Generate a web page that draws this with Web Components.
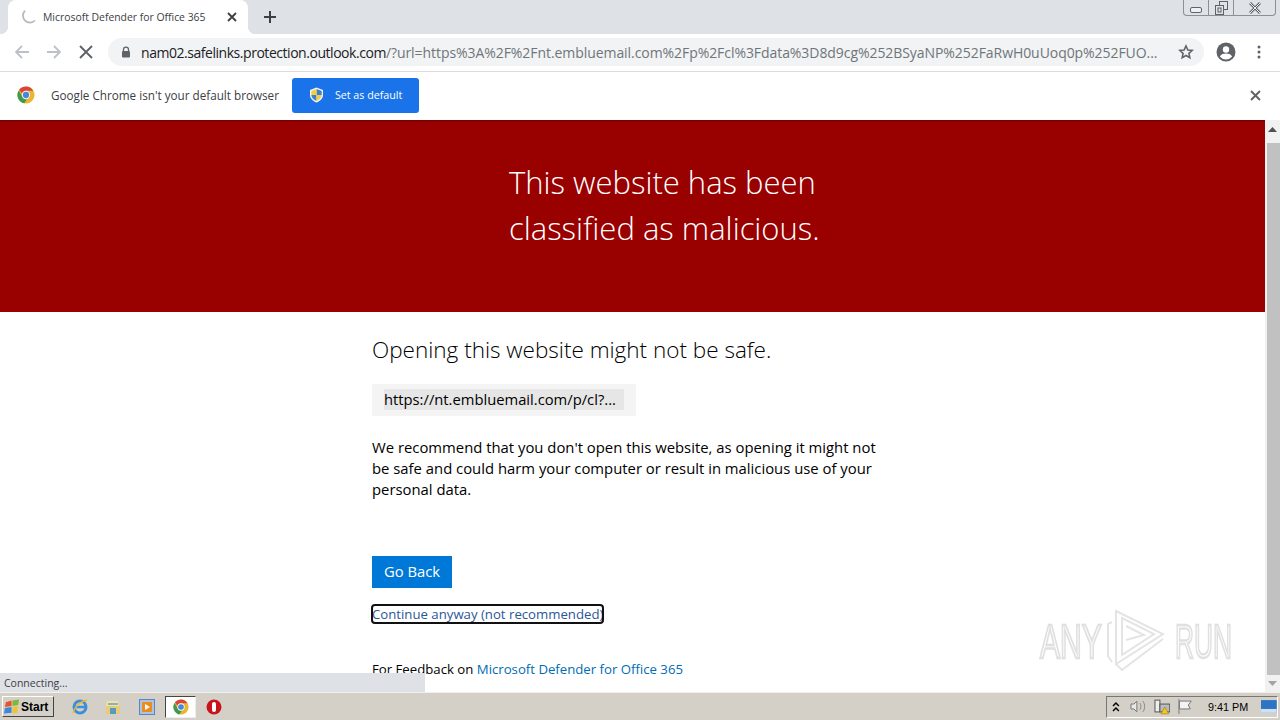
<!DOCTYPE html>
<html>
<head>
<meta charset="utf-8">
<title>Microsoft Defender for Office 365</title>
<style>
  html, body { margin: 0; height: 100%; overflow: hidden; }
  body { display: flex; flex-direction: column; height: 720px; font-family: "Open Sans", sans-serif; }
</style>
</head>
<body>
<tab-strip></tab-strip>
<nav-bar></nav-bar>
<info-bar></info-bar>
<page-view>
  <warning-banner>This website has been<br>classified as malicious.</warning-banner>
  <warning-body></warning-body>
</page-view>
<task-bar></task-bar>

<script>
const chromeLogo = (size) => `
  <svg width="${size}" height="${size}" viewBox="0 0 20 20">
    <circle cx="10" cy="10" r="9.5" fill="#e8b730"/>
    <path d="M10 .5a9.5 9.5 0 0 1 8.2 4.75H10a4.75 4.75 0 0 0-4.5 3.2L2.4 4.2A9.5 9.5 0 0 1 10 .5z" fill="#d9453a"/>
    <path d="M1.9 5 6 12.3a4.75 4.75 0 0 0 5 2.3l-2.9 4.7A9.5 9.5 0 0 1 1.9 5z" fill="#3c9a52"/>
    <circle cx="10" cy="10" r="4.6" fill="#f4f4f4"/>
    <circle cx="10" cy="10" r="3.5" fill="#4a86d8"/>
  </svg>`;

class TabStrip extends HTMLElement {
  constructor() {
    super();
    this.attachShadow({ mode: 'open' }).innerHTML = `
      <style>
        :host { display: flex; height: 34px; background: #dee1e6; padding-left: 8px; position: relative; flex: none; }
        .tab { width: 240px; height: 34px; box-sizing: border-box; background: #fff; border-radius: 8px 8px 0 0; position: relative;
               display: flex; align-items: center; padding: 0 0 0 12px; font: 10.4px "Open Sans", sans-serif; color: #3c4043; }
        .tab::before, .tab::after { content: ""; position: absolute; bottom: 0; width: 8px; height: 8px; background: #fff; }
        .tab::before { left: -8px; -webkit-mask: radial-gradient(circle at 0 0, transparent 8px, #000 8.5px); }
        .tab::after { right: -8px; -webkit-mask: radial-gradient(circle at 100% 0, transparent 8px, #000 8.5px); }
        .spin { width: 16px; height: 16px; margin-right: 7px; flex: none; }
        .label { flex: 1; white-space: nowrap; }
        .close { margin-right: 10px; width: 12px; height: 12px; }
        .plus { margin: 10px 0 0 15px; width: 14px; height: 14px; }
        .win { position: absolute; top: 0; right: 4px; width: 93px; height: 16px; box-sizing: border-box;
               border: 1px solid #8b9097; border-top: 0; border-radius: 0 0 4px 4px; display: flex; background: #dfe2e7; }
        .win div { display: flex; align-items: center; justify-content: center; }
        .win div + div { border-left: 1px solid #8b9097; }
      </style>
      <div class="tab">
        <svg class="spin" viewBox="0 0 16 16"><path d="M5 1.6A7 7 0 1 0 15 11.5" fill="none" stroke="#b5b8bc" stroke-width="1.7"/></svg>
        <span class="label">Microsoft Defender for Office 365</span>
        <svg class="close" viewBox="0 0 12 12"><path d="M2 2l8 8M10 2l-8 8" stroke="#3c4043" stroke-width="1.8"/></svg>
      </div>
      <svg class="plus" viewBox="0 0 14 14"><path d="M7 1v12M1 7h12" stroke="#3c4043" stroke-width="2"/></svg>
      <div class="win">
        <div style="width:24px"><svg style="margin-top:4px" width="14" height="8" viewBox="0 0 14 8"><rect x="1.5" y="1.5" width="11" height="5" rx="1.5" fill="#eef0f2" stroke="#5f6368"/></svg></div>
        <div style="width:24px"><svg width="13" height="14" viewBox="0 0 13 14"><rect x="4.5" y=".5" width="8" height="8" fill="none" stroke="#5f6368"/><rect x=".5" y="4.5" width="8" height="9" fill="#dfe2e7" stroke="#5f6368"/><rect x="3" y="7" width="3" height="4" fill="none" stroke="#5f6368"/></svg></div>
        <div style="flex:1"><svg width="14" height="12" viewBox="0 0 14 12"><path d="M2 1l10 10M12 1L2 11" stroke="#5f6368" stroke-width="2.6"/><path d="M2 1l10 10M12 1L2 11" stroke="#eef0f2" stroke-width="1"/></svg></div>
      </div>`;
  }
}

class NavBar extends HTMLElement {
  constructor() {
    super();
    this.attachShadow({ mode: 'open' }).innerHTML = `
      <style>
        :host { display: flex; align-items: center; height: 38px; box-sizing: border-box; background: #fff;
                border-bottom: 1px solid #dadce0; flex: none; padding: 0 0 1px 14px; }
        svg { flex: none; }
        .omni { margin-left: 14px; width: 1096px; height: 28px; box-sizing: border-box; background: #f1f3f4; border-radius: 14px;
                display: flex; align-items: center; padding: 0 10px 0 12px; font: 14px "Open Sans", sans-serif; letter-spacing: -.065px; }
        .url { flex: 1; margin-left: 9px; white-space: nowrap; overflow: hidden; color: #70757a; }
        .url b { font-weight: 400; color: #202124; letter-spacing: -.46px; }
      </style>
      <svg width="16" height="16" viewBox="0 0 16 16"><path d="M15 8H2M8 2 2 8l6 6" fill="none" stroke="#bdc1c6" stroke-width="1.8"/></svg>
      <svg style="margin-left:16px" width="16" height="16" viewBox="0 0 16 16"><path d="M1 8h13M8 2l6 6-6 6" fill="none" stroke="#bdc1c6" stroke-width="1.8"/></svg>
      <svg style="margin-left:16px" width="16" height="16" viewBox="0 0 16 16"><path d="M2 2l12 12M14 2 2 14" stroke="#5f6368" stroke-width="1.9"/></svg>
      <div class="omni">
        <svg width="12" height="12" viewBox="0 0 12 12"><path d="M3.5 5V3.6a2.5 2.5 0 0 1 5 0V5" fill="none" stroke="#5f6368" stroke-width="1.3"/><rect x="2" y="5" width="8" height="6.5" rx="1" fill="#5f6368"/></svg>
        <span class="url"><b>nam02.safelinks.protection.outlook.com</b>/?url=https%3A%2F%2Fnt.embluemail.com%2Fp%2Fcl%3Fdata%3D8d9cg%252BSyaNP%252FaRwH0uUoq0p%252FUO...</span>
        <svg width="16" height="16" viewBox="0 0 24 24"><path d="M12 3l2.8 6 6.4.7-4.8 4.4 1.3 6.4L12 17.3l-5.7 3.2 1.3-6.4L2.800 9.700 9.200 9z" fill="none" stroke="#5f6368" stroke-width="2.400"/></svg>
      </div>
      <svg style="margin-left:12px" width="20" height="20" viewBox="0 0 20 20"><circle cx="10" cy="10" r="9.500" fill="#5f6368"/><circle cx="10" cy="7.500" r="3.200" fill="#fff"/><path d="M3.800 14.500c1.500-2.400 3.800-3 6.200-3s4.700.6 6.200 3a8 8 0 0 1-12.400 0z" fill="#fff"/></svg>
      <svg style="margin-left:21px" width="4" height="14" viewBox="0 0 4 14"><circle cx="2" cy="2" r="1.500" fill="#5f6368"/><circle cx="2" cy="7" r="1.500" fill="#5f6368"/><circle cx="2" cy="12" r="1.500" fill="#5f6368"/></svg>`;
  }
}

class InfoBar extends HTMLElement {
  constructor() {
    super();
    this.attachShadow({ mode: 'open' }).innerHTML = `
      <style>
        :host { display: flex; align-items: center; height: 48px; box-sizing: border-box; background: #fff; flex: none; padding: 0 0 2px 17px;
                font: 11.7px "Open Sans", sans-serif; color: #3c4043; }
        .msg { margin-left: 16px; white-space: nowrap; }
        button { margin-left: 13px; width: 127px; height: 35px; border: 0; border-radius: 3px; background: #1a73e8; color: #fff;
                 font: 10.7px "Open Sans", sans-serif; display: flex; align-items: center; padding: 0 0 0 17px; }
        button svg { margin-right: 11px; }
        .x { margin-left: auto; margin-right: 19px; }
      </style>
      ${chromeLogo(18)}
      <span class="msg">Google Chrome isn't your default browser</span>
      <button>
        <svg width="15" height="16" viewBox="0 0 15 16"><path d="M7.500.5 14 3v5c0 3.500-3 6-6.500 7.500C4 14 1 11.500 1 8V3z" fill="#f4f4f0"/><path d="M7.500 2 12.700 4v4H7.500zM7.500 8v6C5 12.800 2.500 11 2.300 8z" fill="#3f7fd0"/><path d="M7.500 2v6H2.300V4zM7.500 8h5.200c-.2 3-2.700 4.800-5.200 6z" fill="#f2cf3f"/></svg>
        Set as default
      </button>
      <svg class="x" width="11" height="11" viewBox="0 0 11 11"><path d="M1 1l9 9M10 1 1 10" stroke="#5f6368" stroke-width="1.900"/></svg>`;
  }
}

class PageView extends HTMLElement {
  constructor() {
    super();
    this.attachShadow({ mode: 'open' }).innerHTML = `
      <style>
        :host { display: flex; flex: 1; min-height: 0; position: relative; background: #fff; }
        .content { flex: 1; min-width: 0; overflow: hidden; }
        .bar { width: 15px; flex: none; background: #f1f1f1; display: flex; flex-direction: column; align-items: center; }
        .end { height: 23px; box-sizing: border-box; display: flex; align-items: center; justify-content: center; flex: none; }
        .thumb { flex: 1; width: 13px; background: #c1c1c1; margin-left: 1px; }
        .status { position: absolute; left: 0; bottom: 0; width: 425px; height: 19px; box-sizing: border-box; background: #dee1e6;
                  font: 10.5px "Open Sans", sans-serif; color: #3c4043; padding: 3px 0 0 4px; }
        .mark { position: absolute; left: 1036px; top: 486px; overflow: visible; filter: blur(.6px); }
        .mark text { font: 400 49px "Liberation Sans", sans-serif; fill: #fcfcfc; stroke: #e0e0e0; stroke-width: 2.4px; }
        .mark path { fill: none; stroke: #e4e4e4; stroke-width: 2; }
      </style>
      <div class="content"><slot></slot></div>
      <div class="bar">
        <div class="end" style="padding-bottom:4px"><svg width="9" height="5" viewBox="0 0 9 5"><path d="M4.500 0 9 5H0z" fill="#505050"/></svg></div>
        <div class="thumb"></div>
        <div class="end" style="height:17px"><svg width="9" height="5" viewBox="0 0 9 5"><path d="M0 0h9L4.500 5z" fill="#a3a3a3"/></svg></div>
      </div>
      <svg class="mark" width="200" height="70" viewBox="0 0 200 70">
        <text transform="translate(4 52) scale(.615 1)">ANY</text>
        <text transform="translate(139 52) scale(.537 1)">RUN</text>
        <path d="M76 16 72 18V50L76 56"/>
        <path d="M80 5 127 28 80 58Z"/>
        <path d="M86 12 118 28 86 49Z"/>
        <path d="M90 34 108 29 90 20M80 58 86 64 127 33"/>
      </svg>
      <div class="status">Connecting...</div>`;
  }
}

class WarningBanner extends HTMLElement {
  constructor() {
    super();
    this.attachShadow({ mode: 'open' }).innerHTML = `
      <style>
        :host { display: block; height: 192px; box-sizing: border-box; background: #990000; color: #fff; padding: 39px 0 0 509px;
                font: 300 31px/46px "Open Sans", sans-serif; box-shadow: inset 0 2px 2px -1px rgba(60,0,0,.5); }
      </style>
      <slot></slot>`;
  }
}

class WarningBody extends HTMLElement {
  constructor() {
    super();
    this.attachShadow({ mode: 'open' }).innerHTML = `
      <style>
        :host { display: block; padding: 22px 0 0 372px; font: 14.85px/21px "Open Sans", sans-serif; color: #000; }
        h2 { margin: 0 0 18px; font: 300 22.5px/32px "Open Sans", sans-serif; }
        .url-box { width: 264px; height: 32px; box-sizing: border-box; background: #f4f4f4; padding: 5px 12px; }
        .url-box span { display: block; width: 240px; height: 21px; background: #e6e6e6; white-space: nowrap; font-size: 14.75px; }
        p { margin: 21px 0 0; width: 520px; }
        .back { margin-top: 56px; width: 80px; height: 32px; border: 0; padding: 0 0 2px; background: #0078d7; color: #fff; font: 14.8px "Open Sans", sans-serif; display: block; }
        .cont { display: block; margin-top: 17px; width: 231px; height: 18px; border-radius: 3px; outline: 2px solid #111; outline-offset: -1px;
                color: #2b5797; font-size: 13.2px; line-height: 18px; text-decoration: none; white-space: nowrap; }
        .feedback { margin-top: 36px; font-size: 13.2px; white-space: nowrap; }
        .feedback a { color: #006cb4; text-decoration: none; }
      </style>
      <h2>Opening this website might not be safe.</h2>
      <div class="url-box"><span>https://nt.embluemail.com/p/cl?...</span></div>
      <p>We recommend that you don't open this website, as opening it might not be safe and could harm your computer or result in malicious use of your personal data.</p>
      <button class="back">Go Back</button>
      <a class="cont" href="#">Continue anyway (not recommended)</a>
      <div class="feedback">For Feedback on <a href="#">Microsoft Defender for Office 365</a></div>`;
  }
}

class TaskBar extends HTMLElement {
  constructor() {
    super();
    this.attachShadow({ mode: 'open' }).innerHTML = `
      <style>
        :host { display: flex; align-items: center; height: 28px; box-sizing: border-box; flex: none; background: #d4d0c8;
                border-top: 1px solid #f2f0ea; font: 12px "Liberation Sans", sans-serif; color: #000; }
        .start { margin-left: 2px; width: 52px; height: 21px; box-sizing: border-box; background: #d4d0c8; border: 1px solid; border-color: #fff #444 #444 #fff;
                 display: flex; align-items: center; font: bold 12px "Liberation Sans", sans-serif; padding-left: 1px; }
        .apps { display: flex; align-items: center; margin-left: 17px; }
        .apps > * { flex: none; }
        .active { width: 31px; height: 22px; box-sizing: border-box; background: #fff; border: 1px solid; border-color: #444 #eee #eee #444; display: flex; align-items: center; justify-content: center; }
        .tray { margin-left: auto; margin-right: 2px; height: 22px; width: 172px; box-sizing: border-box; border: 1px solid; border-color: #777 #fff #fff #777;
                display: flex; align-items: center; padding-left: 5px; }
        .clock { margin-left: 15px; font-size: 10.8px; white-space: nowrap; }
      </style>
      <div class="start">
        <svg width="17" height="16" viewBox="0 0 18 16"><path d="M2 3l6-2v6l-7 1z" fill="#e8542a"/><path d="M9 1l7-1-1 6-6 1z" fill="#7cb83e"/><path d="M1 9l7-1v6l-8 1z" fill="#3b8ad9"/><path d="M9 8l6-1-1 7-5 1z" fill="#f0c330"/></svg>
        Start
      </div>
      <div class="apps">
        <svg width="18" height="18" viewBox="0 0 18 18"><circle cx="9" cy="9" r="6" fill="none" stroke="#3d8fd6" stroke-width="3"/><path d="M3 9h12" stroke="#3d8fd6" stroke-width="2.500"/><path d="M2 15C4 8 10 3 16 2" fill="none" stroke="#e9b93a" stroke-width="1.500"/></svg>
        <svg style="margin-left:16px" width="16" height="16" viewBox="0 0 16 16"><path d="M1 6h14v9H1z" fill="#e7cd7a"/><path d="M2 2h11l1 5H1z" fill="#f4e39a"/><rect x="5" y="9" width="6" height="6" fill="#5b9bb8"/><rect x="3" y="4" width="10" height="2" fill="#7fb4cc"/></svg>
        <svg style="margin-left:18px" width="16" height="16" viewBox="0 0 16 16"><rect x=".5" y=".5" width="15" height="15" fill="#a9c4e4" stroke="#5a86bd"/><rect x="3" y="3" width="10" height="10" rx="1" fill="#ef8a1f"/><path d="M6 5l5 3-5 3z" fill="#fff"/></svg>
        <div class="active" style="margin-left:10px">${chromeLogo(16)}</div>
        <svg style="margin-left:10px" width="16" height="16" viewBox="0 0 16 16"><circle cx="8" cy="8" r="7.500" fill="#c8141c"/><rect x="6" y="3" width="4" height="10" rx="2" fill="#fff"/></svg>
      </div>
      <div class="tray">
        <svg width="8" height="10" viewBox="0 0 8 10"><path d="M1 4l3-3 3 3M1 9l3-3 3 3" fill="none" stroke="#000" stroke-width="1.500"/></svg>
        <svg style="margin-left:10px" width="17" height="15" viewBox="0 0 17 15"><path d="M1 5h3l3-3v11l-3-3H1z" fill="#e8e8e8" stroke="#777"/><path d="M10 4c1.500 2 1.500 5 0 7M13 2c2.500 3 2.500 8 0 11" fill="none" stroke="#888"/></svg>
        <svg style="margin-left:7px" width="17" height="16" viewBox="0 0 17 16"><rect x="1" y="1" width="5" height="12" fill="#eee" stroke="#555"/><rect x="6" y="5" width="10" height="8" fill="#bbb" stroke="#555"/><path d="M11 8l4 7H7z" fill="#f4c61e" stroke="#8a6d00" stroke-width=".5"/></svg>
        <svg style="margin-left:7px" width="16" height="15" viewBox="0 0 16 15"><path d="M2 0v15" stroke="#777"/><path d="M2.500 2h12l-3 4 2 4h-11z" fill="#f4f4f4" stroke="#777"/></svg>
        <span class="clock">9:41 PM</span>
        <svg style="margin-left:13px" width="16" height="13" viewBox="0 0 16 13"><rect width="16" height="13" fill="#2e74c4"/><rect y="9" width="16" height="4" fill="#cfe0f2"/></svg>
      </div>`;
  }
}

customElements.define('tab-strip', TabStrip);
customElements.define('nav-bar', NavBar);
customElements.define('info-bar', InfoBar);
customElements.define('page-view', PageView);
customElements.define('warning-banner', WarningBanner);
customElements.define('warning-body', WarningBody);
customElements.define('task-bar', TaskBar);
</script>
</body>
</html>
